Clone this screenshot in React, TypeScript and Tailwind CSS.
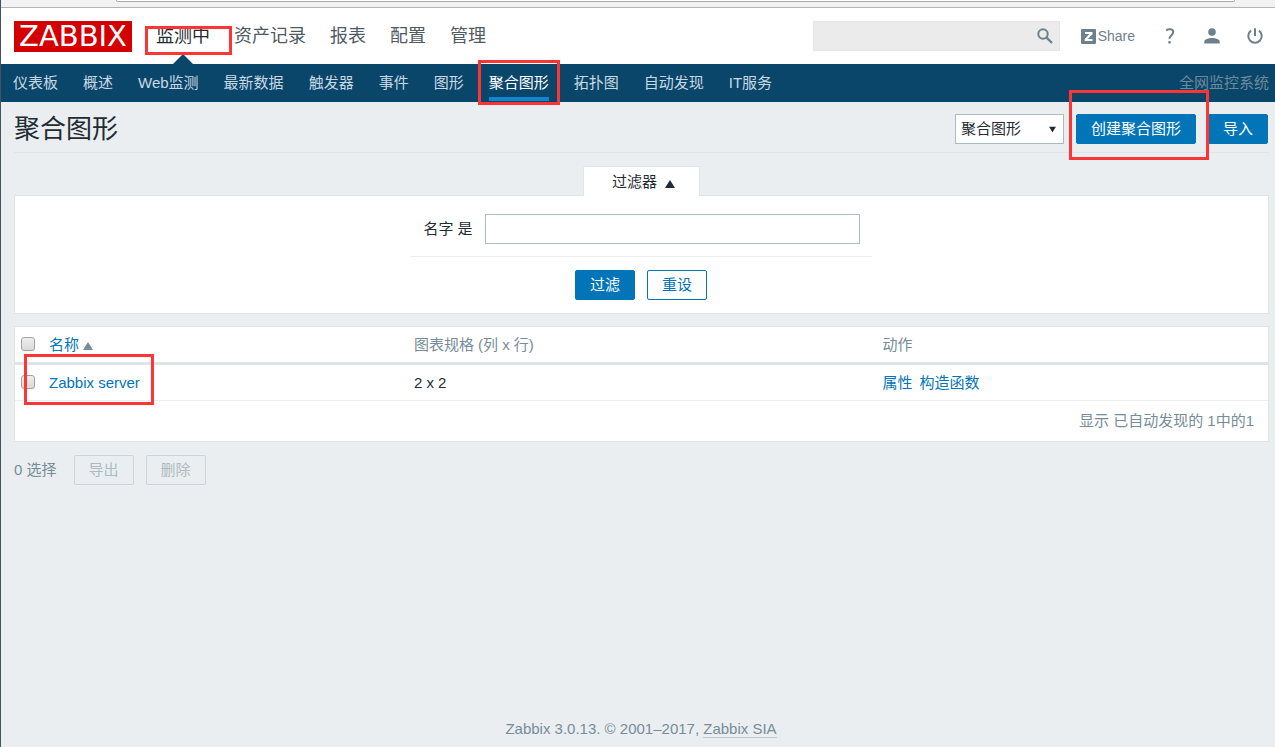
import { clsx } from "clsx"
import type { ReactNode } from "react"

const mainMenu = ["监测中", "资产记录", "报表", "配置", "管理"]

const subMenu = [
  "仪表板",
  "概述",
  "Web监测",
  "最新数据",
  "触发器",
  "事件",
  "图形",
  "聚合图形",
  "拓扑图",
  "自动发现",
  "IT服务",
]

const screens = [{ name: "Zabbix server", size: "2 x 2" }]

function Highlight({ className }: { className: string }) {
  return <span aria-hidden="true" className={clsx("pointer-events-none absolute z-10 border-3 border-[#fd3535]", className)} />
}

function Button({ variant = "solid", children }: { variant?: "solid" | "outline" | "disabled"; children: ReactNode }) {
  return (
    <button
      type="button"
      disabled={variant === "disabled"}
      className={clsx(
        "h-[30px] rounded-xs border px-3.5 leading-7 whitespace-nowrap",
        variant === "solid" && "border-[#0275b8] bg-[#0275b8] text-white",
        variant === "outline" && "border-[#0275b8] bg-white text-[#0275b8]",
        variant === "disabled" && "border-[#ccd5d9] text-[#acbbc2]"
      )}
    >
      {children}
    </button>
  )
}

function Checkbox({ label }: { label: string }) {
  return (
    <input
      type="checkbox"
      aria-label={label}
      className="mb-0.5 block size-3.5 appearance-none rounded-[3px] border border-[#a3a3a3] bg-linear-to-b from-[#eeeeee] to-[#d9d9d9] shadow-xs"
    />
  )
}

function Triangle({ className }: { className: string }) {
  return (
    <svg viewBox="0 0 10 8" className={clsx("inline-block", className)} fill="currentColor" aria-hidden="true">
      <path d="M5 0 10 8H0z" />
    </svg>
  )
}

function Header() {
  return (
    <header>
      <div className="flex h-14 items-center bg-white pr-3 pl-[13px]">
        <a href="#" className="flex h-[31px] w-[118px] items-center justify-center bg-[#d40000] font-['DejaVu_Sans',sans-serif] text-[29px] leading-none text-white">
          ZABBIX
        </a>
        <nav className="ml-6 flex gap-6 text-lg leading-7 text-[#4f5b62]">
          {mainMenu.map((item, i) => (
            <div key={item} className="relative">
              <a href="#" className={clsx("whitespace-nowrap", i === 0 && "text-[#1f2c33]")}>
                {item}
              </a>
              {i === 0 && (
                <>
                  <svg viewBox="0 0 20 10" className="absolute top-8 left-[17px] h-2.5 w-5" fill="#0a466a" aria-hidden="true">
                    <path d="M10 0 20 10H0z" />
                  </svg>
                  <Highlight className="top-1 -right-[22px] bottom-[-5px] -left-[11px]" />
                </>
              )}
            </div>
          ))}
        </nav>
        <div className="ml-auto flex items-center text-[#6c818c]">
          <form role="search" className="flex h-[30px] w-[247px] items-center border border-[#e4e4e4] bg-[#ebebeb] pr-1.5">
            <input type="text" aria-label="搜索" className="h-full min-w-0 flex-1 bg-transparent px-1 outline-none" />
            <button type="button" aria-label="搜索">
              <svg viewBox="0 0 16 16" className="size-4" fill="none" stroke="currentColor" aria-hidden="true">
                <circle cx="6" cy="6" r="4.7" strokeWidth="2" />
                <path d="m9.400 9.400 5.600 5.600" strokeWidth="2.300" />
              </svg>
            </button>
          </form>
          <a href="#" className="ml-[21px] flex items-center gap-0.5 text-sm">
            <svg viewBox="0 0 15 15" className="size-[15px]" aria-hidden="true">
              <rect width="15" height="15" rx="1" fill="currentColor" />
              <path d="M4 3h7.500v2.200L6.800 10h4.700v2H3.700V9.900L8.500 5H4z" fill="#fff" />
            </svg>
            Share
          </a>
          <a href="#" aria-label="帮助" className="ml-[30px]">
            <svg viewBox="0 0 10 16" className="h-4 w-2.500" fill="none" stroke="currentColor" strokeWidth="2" aria-hidden="true">
              <path d="M1.200 2.400C3.800.400 8.200.900 8.200 4.100c0 3-3.700 3.300-3.700 6.700" />
              <path d="M3.300 14.300h2.400" strokeWidth="2.400" />
            </svg>
          </a>
          <a href="#" aria-label="用户" className="ml-[29px]">
            <svg viewBox="0 0 16 16" className="size-4" fill="currentColor" aria-hidden="true">
              <circle cx="8" cy="4.100" r="3.800" />
              <path d="M.3 15.500v-1.800C.3 11 4.600 9.900 8 9.900s7.700 1.100 7.700 3.800v1.800z" />
            </svg>
          </a>
          <a href="#" aria-label="退出" className="ml-[27px]">
            <svg viewBox="0 0 16 16" className="size-4" fill="none" stroke="currentColor" strokeWidth="2" aria-hidden="true">
              <path d="M4 2.600a6.700 6.700 0 1 0 8 0M8 .3v7.700" />
            </svg>
          </a>
        </div>
      </div>
      <div className="flex h-[38px] items-center bg-[#0a466a] pr-1.5 pl-3 text-[#c8d9e3]">
        <nav className="flex h-full gap-[25px]">
          {subMenu.map((item) => {
            const active = item === "聚合图形"
            return (
              <div key={item} className="relative">
                <a
                  href="#"
                  className={clsx(
                    "block h-[37px] border-b-4 pt-px leading-9 whitespace-nowrap",
                    active ? "border-[#1385ce] text-white" : "border-transparent"
                  )}
                >
                  {item}
                </a>
                {active && <Highlight className="-inset-x-[11px] -top-1 -bottom-[3px]" />}
              </div>
            )
          })}
        </nav>
        <span className="ml-auto text-[#6d8a9b]">全网监控系统</span>
      </div>
    </header>
  )
}

function TitleBar() {
  return (
    <div className="flex h-[51px] items-center justify-between border-b border-[#dfe4e7]">
      <h1 className="pt-1 text-[26px] leading-8">聚合图形</h1>
      <div className="flex gap-3 pt-1 pr-px">
        <div className="relative">
          <select aria-label="类型" className="block h-[30px] w-[109px] appearance-none border border-[#acbbc2] bg-white px-[5px]">
            <option>聚合图形</option>
            <option>幻灯片演示</option>
          </select>
          <Triangle className="pointer-events-none absolute top-3 right-2 size-[7px] rotate-180" />
        </div>
        <div className="relative">
          <Button>创建聚合图形</Button>
          <Highlight className="-top-6 -right-[13px] -bottom-4 -left-[7px]" />
        </div>
        <Button>导入</Button>
      </div>
    </div>
  )
}

function Filter() {
  return (
    <section className="mt-[13px]">
      <div className="flex justify-center">
        <button type="button" className="relative -mb-px flex h-[30px] w-[117px] items-center justify-center gap-2 rounded-t-xs border border-b-0 border-[#dfe4e7] bg-white pl-1">
          过滤器
          <Triangle className="mt-1 h-2 w-2.5" />
        </button>
      </div>
      <form className="flex flex-col items-center border border-[#dfe4e7] bg-white pt-[18px] pb-[13px]">
        <div className="flex items-center gap-3 border-b border-[#ebeef0] px-3 pb-3">
          <label htmlFor="filter-name">名字 是</label>
          <input id="filter-name" type="text" className="h-[30px] w-[375px] border border-[#acbbc2] bg-white px-1" />
        </div>
        <div className="mt-[13px] flex gap-3 pr-px">
          <Button>过滤</Button>
          <Button variant="outline">重设</Button>
        </div>
      </form>
    </section>
  )
}

function ScreenTable() {
  return (
    <table className="mt-3 w-full table-fixed border-separate border-spacing-0 border border-[#dfe4e7] bg-white text-left leading-5">
      <colgroup>
        <col className="w-7" />
        <col className="w-[29.6%]" />
        <col className="w-[37.4%]" />
        <col />
      </colgroup>
      <thead className="text-[#768d99]">
        <tr className="h-[38px] *:border-b-3 *:border-[#dfe4e7] *:font-normal">
          <th className="pl-1.5">
            <Checkbox label="全选" />
          </th>
          <th className="pl-1.5">
            <a href="#" className="text-[#0275b8]">
              名称
            </a>
            <Triangle className="ml-1 h-2 w-2.5" />
          </th>
          <th>图表规格 (列 x 行)</th>
          <th>动作</th>
        </tr>
      </thead>
      <tbody>
        {screens.map((screen) => (
          <tr key={screen.name} className="h-9 *:border-b *:border-[#ebeef0]">
            <td className="pl-1.5">
              <Checkbox label={screen.name} />
            </td>
            <td className="relative pl-1.5">
              <a href="#" className="text-[#0275b8]">
                {screen.name}
              </a>
              <Highlight className="-top-[11px] -bottom-[5px] -left-[19px] w-[130px]" />
            </td>
            <td>{screen.size}</td>
            <td>
              <div className="flex gap-[7px] text-[#0275b8]">
                <a href="#">属性</a>
                <a href="#">构造函数</a>
              </div>
            </td>
          </tr>
        ))}
        <tr className="h-10">
          <td colSpan={4} className="pr-3.5 text-right text-[#768d99]">
            显示 已自动发现的 1中的1
          </td>
        </tr>
      </tbody>
    </table>
  )
}

export default function App() {
  return (
    <div className="flex min-h-screen flex-col border-l border-[#46525c] bg-[#ebeef0] font-['Liberation_Sans','Noto_Sans_CJK_SC',sans-serif] text-[15px] leading-5 text-[#1f2c33]">
      {/* bottom edge of the browser toolbar */}
      <div className="h-2 border-b border-[#b4b4b4] bg-[#f2f2f2] pr-10 pl-[115px]">
        <div className="h-0.5 rounded-b-sm border border-t-0 border-[#a9a9a9] bg-white" />
      </div>
      <Header />
      <main className="pr-1.5 pl-[13px]">
        <TitleBar />
        <Filter />
        <ScreenTable />
        <div className="mt-[13px] flex items-center gap-3 text-[#768d99]">
          <span className="mr-[5px]">0 选择</span>
          <Button variant="disabled">导出</Button>
          <Button variant="disabled">删除</Button>
        </div>
      </main>
      <footer className="mt-auto pb-2 pl-1.5 text-center text-[#768d99]">
        Zabbix 3.0.13. © 2001–2017,{" "}
        <a href="#" className="border-b border-[#c0c8cd]">
          Zabbix SIA
        </a>
      </footer>
    </div>
  )
}
